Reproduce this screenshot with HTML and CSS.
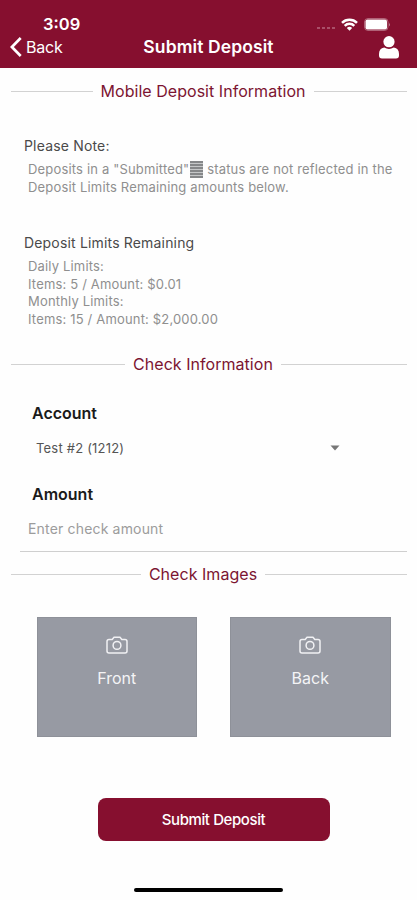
FILE: index.html
```html
<!DOCTYPE html>
<html lang="en">

<head>
	<meta charset="UTF-8">
	<meta name="viewport" content="width=device-width, initial-scale=1.0">
	<title>Submit Deposit</title>
	<link rel="stylesheet" href="styles.css">
</head>

<body>
	<header class="header">
		<div class="status-bar">
			<span class="time">3:09</span>
			<div class="status-icons">
				<span class="signal"><i></i><i></i><i></i><i></i></span>
				<svg class="wifi" width="17" height="13" viewBox="0 0 17 13" fill="none" stroke="#fff" stroke-width="2.5">
					<path d="M1 4.8a10.6 10.6 0 0 1 15 0" />
					<path d="M3.7 7.8a6.8 6.8 0 0 1 9.6 0" />
					<path d="M8.5 12.8L5.8 10a3.9 3.9 0 0 1 5.4 0z" fill="#fff" stroke="none" />
				</svg>
				<svg class="battery" width="27" height="13" viewBox="0 0 27 13">
					<rect x="0.5" y="0.5" width="23.5" height="12" rx="3.5" fill="none" stroke="#fff" stroke-opacity="0.35" />
					<rect x="1.5" y="1.5" width="21.5" height="10" rx="2" fill="#fff" />
					<path d="M25 4.5q1.6 2 0 4z" fill="#fff" fill-opacity="0.5" />
				</svg>
			</div>
		</div>
		<nav class="nav-bar">
			<a class="back-link" href="#">
				<svg width="12" height="20" viewBox="0 0 12 20" fill="none" stroke="#fff" stroke-width="2.7">
					<path d="M10.7 1L1.9 10l8.8 9" />
				</svg>
				Back
			</a>
			<h1>Submit Deposit</h1>
			<a class="profile" href="#" aria-label="Profile">
				<svg width="20" height="23" viewBox="0 0 20 23" fill="#fff">
					<circle cx="10" cy="5.7" r="5.6" />
					<path d="M5.2 11.6q4.8 2.7 9.6 0Q20 12.6 20 18v1.5q0 3-3 3H3q-3 0-3-3V18q0-5.4 5.2-6.4z" />
				</svg>
			</a>
		</nav>
	</header>

	<main>
		<h2 class="section-title">Mobile Deposit Information</h2>
		<section class="notes">
			<h3>Please Note:</h3>
			<p>Deposits in a "Submitted"<span class="missing-char"></span> status are not reflected in the<br>Deposit Limits Remaining amounts below.</p>
			<h3 class="limits-title">Deposit Limits Remaining</h3>
			<p>Daily Limits:<br>Items: 5 / Amount: $0.01<br>Monthly Limits:<br>Items: 15 / Amount: $2,000.00</p>
		</section>

		<h2 class="section-title">Check Information</h2>
		<form class="check-form">
			<label>Account</label>
			<div class="select">
				<span>Test #2 (1212)</span>
				<svg width="10" height="6" viewBox="0 0 10 6"><path d="M0.5 0.5h9L5 5.5z" fill="#777" /></svg>
			</div>
			<label for="amount">Amount</label>
			<input type="text" id="amount" name="amount" placeholder="Enter check amount">
		</form>

		<h2 class="section-title">Check Images</h2>
		<div class="tiles">
			<div class="tile">
				<svg width="22" height="18" viewBox="0 0 22 18" fill="none" stroke="#f1f1f4" stroke-width="1.5" stroke-linejoin="round">
					<path d="M3 3.5h3.2L8 1.3h6l1.8 2.2H19q2 0 2 2V15q0 2-2 2H3q-2 0-2-2V5.5q0-2 2-2z" />
					<circle cx="11" cy="9.4" r="3.9" />
				</svg>
				<span>Front</span>
			</div>
			<div class="tile">
				<svg width="22" height="18" viewBox="0 0 22 18" fill="none" stroke="#f1f1f4" stroke-width="1.5" stroke-linejoin="round">
					<path d="M3 3.5h3.2L8 1.3h6l1.8 2.2H19q2 0 2 2V15q0 2-2 2H3q-2 0-2-2V5.5q0-2 2-2z" />
					<circle cx="11" cy="9.4" r="3.9" />
				</svg>
				<span>Back</span>
			</div>
		</div>
		<button type="submit" class="submit-btn">Submit Deposit</button>
	</main>
	<div class="home-indicator"></div>
</body>

</html>
```
FILE: styles.css
```css
* {
	margin: 0;
	padding: 0;
	box-sizing: border-box;
	font-family: Inter, 'Liberation Sans', sans-serif;
}

body {
	height: 900px;
	background: #fefefe;
	overflow: hidden;
}

.header {
	height: 68px;
	padding-top: 14px;
	background: #860f2f;
	color: #fff;
}

.status-bar {
	display: flex;
	justify-content: space-between;
	align-items: center;
	height: 20px;
	padding: 0 26px 0 43px;
}

.time {
	font-size: 16.5px;
	font-weight: 600;
}

.status-icons {
	display: flex;
	align-items: center;
}

.signal {
	display: flex;
	gap: 2px;
	margin: 8px 6px 0 0;
}

.signal i {
	width: 3px;
	height: 2px;
	background: #a94f68;
}

.wifi {
	margin-right: 6px;
}

.nav-bar {
	display: grid;
	grid-template-columns: 1fr auto 1fr;
	align-items: center;
	height: 26px;
	padding: 0 10px;
}

.back-link {
	display: flex;
	align-items: center;
	gap: 4px;
	font-size: 16px;
	letter-spacing: -0.2px;
	color: #fff;
	text-decoration: none;
}

.nav-bar h1 {
	font-size: 17.5px;
	font-weight: 600;
	line-height: 26px;
	letter-spacing: 0.1px;
}

.profile {
	justify-self: end;
	height: 23px;
	margin-right: 8px;
}

.section-title {
	display: flex;
	align-items: center;
	gap: 8px;
	height: 24px;
	padding: 0 10px 0 11px;
	font-size: 16px;
	font-weight: 400;
	letter-spacing: 0.04px;
	color: #7c1431;
}

.section-title::before,
.section-title::after {
	content: "";
	flex: 1 1 0;
	height: 1px;
	background: #d2d2d2;
}

/* right rule is a little longer than the left one */
.section-title::after {
	flex-basis: 12px;
}

main {
	padding-top: 11px;
}

.notes {
	height: 249px;
	padding: 33px 0 0 24px;
}

.notes h3 {
	height: 20px;
	font-size: 14px;
	font-weight: 400;
	line-height: 20px;
	letter-spacing: 0.17px;
	color: #4a4a4a;
}

.notes p {
	padding: 5px 0 0 4px;
	font-size: 13px;
	line-height: 17.5px;
	letter-spacing: 0.17px;
	color: #8f8f8f;
	white-space: nowrap;
}

.notes .limits-title {
	margin-top: 37px;
}

.missing-char {
	display: inline-block;
	width: 13px;
	height: 17px;
	margin-left: 1px;
	vertical-align: -4px;
	background: repeating-linear-gradient(#858789 0 2px, #c5c7c8 2px 3px);
}

.check-form {
	height: 186px;
	padding: 27px 10px 0 20px;
}

.check-form label {
	display: block;
	height: 20px;
	padding-left: 12px;
	font-size: 16px;
	font-weight: 600;
	line-height: 20px;
	color: #1a1a1a;
}

.select {
	display: flex;
	justify-content: space-between;
	align-items: center;
	height: 49px;
	margin-bottom: 12px;
	padding: 0 67px 0 16px;
	font-size: 13px;
	letter-spacing: 0.2px;
	color: #555;
}

.check-form input {
	display: block;
	width: 100%;
	height: 48px;
	padding: 1px 8px 0;
	border: none;
	border-bottom: 1px solid #cfcfcf;
	background: none;
	font-size: 14px;
	letter-spacing: 0.17px;
	outline: none;
}

.check-form input::placeholder {
	color: #9c9c9c;
}

.tiles {
	display: flex;
	gap: 33px;
	padding: 31px 0 0 36.5px;
}

.tile {
	display: flex;
	flex-direction: column;
	align-items: center;
	width: 160.5px;
	height: 120px;
	padding-top: 18px;
	background: #979aa3;
	border: 1px solid #8e9199;
}

.tile span {
	margin-top: 12px;
	font-size: 16px;
	line-height: 24px;
	color: #f4f4f6;
}

.submit-btn {
	display: block;
	width: 232px;
	height: 43px;
	margin: 61px 0 0 97.5px;
	border: none;
	border-radius: 8px;
	background: #860f2f;
	font-size: 15px;
	font-weight: 500;
	letter-spacing: -0.4px;
	color: #fff;
}

.home-indicator {
	width: 149px;
	height: 4px;
	margin: 47px auto 0;
	border-radius: 2px;
	background: #000;
}
```
